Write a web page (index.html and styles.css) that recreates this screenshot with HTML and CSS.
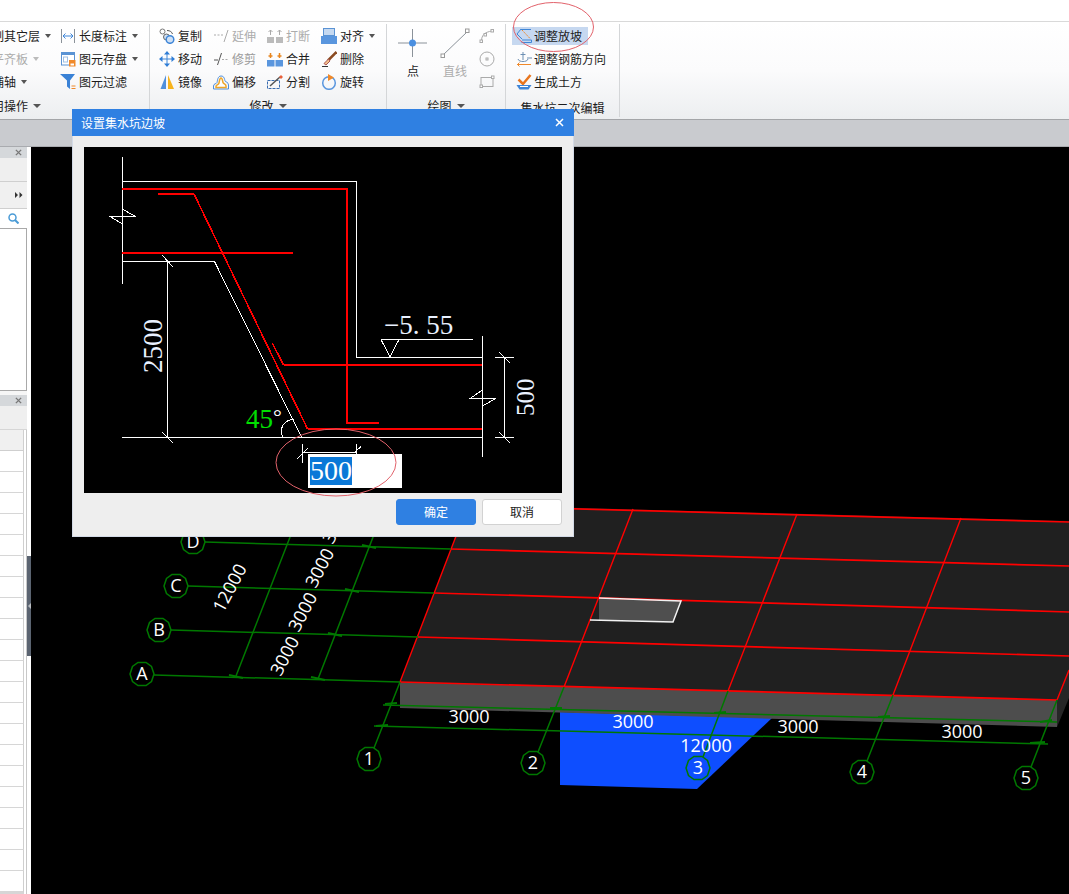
FILE: index.html
```html
<!DOCTYPE html>
<html lang="zh">
<head>
<meta charset="utf-8">
<title>设置集水坑边坡</title>
<link rel="stylesheet" href="styles.css">
</head>
<body>
<div class="app">
  <div class="topbar"></div>

  <div class="ribbon">
    <section class="group g1">
      <div class="g1-body">
        <div class="col c-first">
          <div class="tool"><span>制其它层</span><i class="arrow"></i></div>
          <div class="tool off"><span>平齐板</span><i class="arrow"></i></div>
          <div class="tool"><span>捕轴</span><i class="arrow"></i></div>
        </div>
        <div class="col">
          <div class="tool"><svg class="ico" viewBox="0 0 16 16"><path d="M1.5 1v14M14.5 1v14" stroke="#8b9299" fill="none"/><path d="M3 8h10M5.5 5.5 3 8l2.5 2.5M10.5 5.5 13 8l-2.5 2.5" stroke="#3f86d8" fill="none"/></svg><span>长度标注</span><i class="arrow"></i></div>
          <div class="tool"><svg class="ico" viewBox="0 0 16 16"><rect x="1.5" y="1.5" width="13" height="12.5" fill="#fff" stroke="#5a93d4"/><rect x="1" y="1" width="14" height="3" fill="#5a93d4"/><rect x="3.5" y="6" width="4" height="5" fill="none" stroke="#9fbfe4"/><rect x="9" y="9" width="6.5" height="6.5" fill="#f0892a"/><rect x="10.5" y="12.5" width="3.5" height="2" fill="#fff"/></svg><span>图元存盘</span><i class="arrow"></i></div>
          <div class="tool"><svg class="ico" viewBox="0 0 16 16"><path d="M0 0h15L10 6.500V15L7 12.500V6.500z" fill="#3a82d6"/><path d="M11.500 12h4M11.500 14.500h4" stroke="#f0892a"/></svg><span>图元过滤</span></div>
        </div>
      </div>
      <div class="label label-cut"><span>用操作</span><i class="arrow wide"></i></div>
    </section>

    <section class="group g2">
      <div class="grid4">
        <div class="tool"><svg class="ico" viewBox="0 0 16 16"><circle cx="3.500" cy="3.500" r="2.500" fill="none" stroke="#777"/><path d="M8 2.500c3 0 5 1.500 5.500 3.500" fill="none" stroke="#555"/><circle cx="7.500" cy="9" r="3" fill="#cfe0f4" stroke="#666"/><circle cx="11" cy="11.500" r="3.800" fill="#cfe0f4" stroke="#3f86d8" stroke-width="1.500"/></svg><span>复制</span></div>
        <div class="tool off"><svg class="ico" viewBox="0 0 16 16"><path d="M1 7h9" stroke="#aaa" stroke-dasharray="2 1.500"/><path d="M11 14l4-12" stroke="#aaa"/></svg><span>延伸</span></div>
        <div class="tool off"><svg class="ico" viewBox="0 0 16 16"><rect x="0" y="9" width="7" height="6" fill="#bbb"/><rect x="9" y="9" width="7" height="6" fill="#bbb"/><path d="M3.500 7V2M1.500 4l2-2 2 2M12.500 7V2M10.500 4l2-2 2 2" stroke="#aaa" fill="none"/></svg><span>打断</span></div>
        <div class="tool"><svg class="ico" viewBox="0 0 16 16"><rect x="2.500" y="0.500" width="11" height="7" fill="#c5d9f1" stroke="#5a93d4"/><rect x="0" y="8" width="16" height="8" fill="#5a96de"/></svg><span>对齐</span><i class="arrow"></i></div>

        <div class="tool"><svg class="ico" viewBox="0 0 16 16"><path d="M8 3v10M3 8h10" stroke="#3f86d8"/><path d="M8 0 5 3.500h6zM8 16l-3-3.500h6zM0 8l3.500-3v6zM16 8l-3.500-3v6z" fill="#2f7dd6"/></svg><span>移动</span></div>
        <div class="tool off2"><svg class="ico" viewBox="0 0 16 16"><path d="M1 9h4" stroke="#555"/><path d="M9 8.500h7" stroke="#aaa" stroke-dasharray="2 1.500"/><path d="M4.500 14l4-12" stroke="#555"/></svg><span>修剪</span></div>
        <div class="tool"><svg class="ico" viewBox="0 0 16 16"><rect x="0" y="9" width="7.500" height="6.500" fill="#5a96de"/><rect x="8.500" y="9" width="7.500" height="6.500" fill="#5a96de"/><path d="M3.500 7V2M1.500 5h4M12.500 7V2M10.500 5h4" stroke="#e8851e" stroke-width="1.500"/></svg><span>合并</span></div>
        <div class="tool"><svg class="ico" viewBox="0 0 16 16"><path d="M15.500 1 7 9.500" stroke="#8a4a20" stroke-width="2.500"/><path d="M7.500 8 3 12.500l2 1.500 4-4z" fill="#f3c08a" stroke="#a55"/><path d="M1 15.500h6" stroke="#333"/></svg><span>删除</span></div>

        <div class="tool"><svg class="ico" viewBox="0 0 16 16"><path d="M7 1v14H1.500z" fill="#4f8fdc"/><path d="M9 1l6 14H9z" fill="#f7b31c"/></svg><span>镜像</span></div>
        <div class="tool"><svg class="ico" viewBox="0 0 16 16"><path d="M.5 15v-3c0-2.500 3-2 3.500-3.500S4.500 2 8 2s3.500 3.500 4 5c.5 1 3.500 1 3.500 4v4z" fill="none" stroke="#4f8fdc"/><path d="M3 13.500v-1c0-1.500 2.500-1.500 3-3.500S6.500 4 8 4s1.500 3 2 4.500c.5 1.500 3 1.500 3 3.500v1.500z" fill="#fff" stroke="#eea62a" stroke-width="1.500"/></svg><span>偏移</span></div>
        <div class="tool"><svg class="ico" viewBox="0 0 16 16"><path d="M.5 6.500h12v8H.5z" fill="none" stroke="#3a6db0" stroke-dasharray="3 1"/><path d="M3 12 13 3" stroke="#555" stroke-width="1.500"/><path d="M12 3l2-2 2 2-2 2z" fill="#e8603a"/></svg><span>分割</span></div>
        <div class="tool"><svg class="ico" viewBox="0 0 16 16"><circle cx="8" cy="9" r="6.300" fill="none" stroke="#5a96de" stroke-width="1.500"/><path d="M7 0l6 3.500-6 3.500z" fill="#f0892a"/></svg><span>旋转</span></div>
      </div>
      <div class="label"><span>修改</span><i class="arrow wide"></i></div>
    </section>

    <section class="group g3">
      <div class="g3-body">
        <div class="big">
          <svg class="ico-big" viewBox="0 0 30 38"><path d="M14.500 4v28M0 18h29" stroke="#8b9299" fill="none"/><circle cx="14.500" cy="18" r="3.500" fill="#4a8fe0"/></svg>
          <span>点</span>
        </div>
        <div class="big off">
          <svg class="ico-big" viewBox="0 0 30 38"><path d="M3 30 27 7" stroke="#8b9299" fill="none"/><rect x="1" y="29" width="3.500" height="3.500" fill="#fff" stroke="#999"/><rect x="25.500" y="4" width="3.500" height="3.500" fill="#fff" stroke="#999"/></svg>
          <span>直线</span>
        </div>
        <div class="col small">
          <div class="tool"><svg class="ico" viewBox="0 0 16 16"><path d="M2.500 13C2.500 7 6 4 13 3" fill="none" stroke="#aaa"/><rect x="1" y="12" width="2.500" height="2.500" fill="#fff" stroke="#aaa"/><rect x="5" y="5.500" width="2.500" height="2.500" fill="#fff" stroke="#aaa"/><rect x="12" y="1.500" width="2.500" height="2.500" fill="#fff" stroke="#aaa"/></svg></div>
          <div class="tool"><svg class="ico" viewBox="0 0 16 16"><circle cx="8" cy="8" r="7" fill="none" stroke="#aaa"/><rect x="7" y="7" width="2" height="2" fill="none" stroke="#aaa"/></svg></div>
          <div class="tool"><svg class="ico" viewBox="0 0 16 16"><rect x="2" y="3.500" width="12" height="9" fill="none" stroke="#aaa"/><rect x="1" y="11" width="2.500" height="2.500" fill="#fff" stroke="#aaa"/><rect x="12.500" y="2" width="2.500" height="2.500" fill="#fff" stroke="#aaa"/></svg></div>
        </div>
      </div>
      <div class="label"><span>绘图</span><i class="arrow wide"></i></div>
    </section>

    <section class="group g4">
      <div class="col g4-body">
        <div class="tool sel"><svg class="ico" viewBox="0 0 16 16"><path d="M5 1 1 6l5 5" fill="none" stroke="#3f86d8"/><path d="M5 1.500h10M6 12h9.500v2.500H5.500" fill="none" stroke="#3f86d8"/><path d="M6 2l8.500 9" stroke="#f0892a" stroke-dasharray="2 1"/></svg><span>调整放坡</span></div>
        <div class="tool"><svg class="ico" viewBox="0 0 16 16"><path d="M7 1v8M4.500 3.500h5M2 8c.5 2 3 2.500 5 2.500S11.500 10 12 8" fill="none" stroke="#6d8fb3"/><path d="M11 7h5" stroke="#6d8fb3"/><path d="M1 13.500h14M3.500 11.500l-2 2 2 2" fill="none" stroke="#f0892a"/></svg><span>调整钢筋方向</span></div>
        <div class="tool"><svg class="ico" viewBox="0 0 16 16"><path d="M2.500 5.500 7 10l7.500-9" fill="none" stroke="#e8751e" stroke-width="2.500"/><path d="M.5 11h15l-3 4.500h-9z" fill="#3f86d8"/><path d="M4 12.500h8" stroke="#fff"/></svg><span>生成土方</span></div>
      </div>
      <div class="label label-low"><span>集水坑二次编辑</span></div>
    </section>
  </div>

  <div class="strip"></div>

  <div class="main">
    <aside class="panel">
      <div class="p-title"><svg class="p-x" viewBox="0 0 8 8"><path d="M1 1l6 6M7 1 1 7" stroke="#777" stroke-width="1.600"/></svg></div>
      <div class="p-sec"></div>
      <div class="p-sec2"><svg class="p-more" viewBox="0 0 8 6"><path d="M0 0l3 3-3 3zM4.500 0l3 3-3 3z" fill="#333"/></svg></div>
      <div class="p-search"><svg class="p-lens" viewBox="0 0 11 11"><circle cx="4.500" cy="4.500" r="3.500" fill="none" stroke="#4a9bd6" stroke-width="1.500"/><path d="M7 7l3.500 3.500" stroke="#4a9bd6" stroke-width="2"/></svg></div>
      <div class="p-list"></div>
      <div class="p-gap"></div>
      <div class="p-title"><svg class="p-x" viewBox="0 0 8 8"><path d="M1 1l6 6M7 1 1 7" stroke="#777" stroke-width="1.600"/></svg></div>
      <div class="p-sec p-sec-b"></div>
      <div class="p-table">
        <div class="p-head"></div>
        <div class="p-row"></div><div class="p-row"></div><div class="p-row"></div><div class="p-row"></div>
        <div class="p-row"></div><div class="p-row"></div><div class="p-row"></div><div class="p-row"></div>
        <div class="p-row"></div><div class="p-row"></div><div class="p-row"></div><div class="p-row"></div>
        <div class="p-row"></div><div class="p-row"></div><div class="p-row"></div><div class="p-row"></div>
        <div class="p-row"></div><div class="p-row"></div><div class="p-row"></div><div class="p-row"></div>
        <div class="p-foot"></div>
      </div>
    </aside>
    <div class="splitter"><div class="grip"><i class="grip-arrow"></i></div></div>
    <div class="canvas">
      <svg class="scene" viewBox="31 147 1038 747">
        <defs>
          <polygon id="oct" points="12,0 9.500,7.500 4,11.500 -4,11.500 -9.500,7.500 -12,0 -9.500,-7.500 -4,-11.500 4,-11.500 9.500,-7.500"/>
        </defs>
        <polygon points="560,712 772,718 697,789 560,785" fill="#0e4eff"/>
        <polygon points="400,682 1057,700 1057,727 400,708" fill="#4d4d4d"/>
        <polygon points="1057,700 1069,670 1069,698 1057,727" fill="#262626"/>
        <polygon points="400,682 468,505 1069,521 1069,670 1057,700" fill="#202020"/>
        <polygon points="599,598 681,601 673,622 599,620" fill="#4f4f4f"/>

        <g class="red-h">
          <path d="M468 506 1069 522M451 549 1069 566M434 593 1069 612M418 637 1069 656M400 682 1057 700"/>
        </g>
        <g class="red-v">
          <path d="M400 682 468 505M564 687 633 509M728 691 797 514M893 695 961 518M1057 700 1069 670"/>
        </g>
        <g class="white-l">
          <path d="M599 598 681 601 673 622 590 620"/>
        </g>

        <g class="green">
          <path d="M154 675 400 682M171 630 418 637M188 586 434 593M205 542 451 549"/>
          <path d="M236 676 292 532M318 679 375 532"/>
          <path d="M374 748 400 682M538 752 564 687M703 757 728 691M867 761 893 695M1031 767 1057 700"/>
          <path d="M383 705 1057 722M374 726 1048 744"/>
        </g>
        <g class="green-t">
          <path d="M229 675 243 678M311 677 325 680M328 633 342 636M345 589 359 592M362 545 376 548"/>
          <path d="M385 704 397 703M376 726 388 725M550 708 562 708M714 713 726 712M878 717 890 716M1040 722 1052 720M1030 743 1045 742"/>
        </g>

        <g class="octs">
          <use href="#oct" x="142" y="674"/><use href="#oct" x="159" y="630"/><use href="#oct" x="176" y="586"/><use href="#oct" x="193" y="542"/>
          <use href="#oct" x="369" y="759"/><use href="#oct" x="533" y="763"/><use href="#oct" x="698" y="768"/><use href="#oct" x="862" y="772"/><use href="#oct" x="1026" y="778"/>
        </g>

        <g class="lbl">
          <text x="142" y="680">A</text><text x="159" y="636">B</text><text x="176" y="592">C</text><text x="193" y="548">D</text>
          <text x="369" y="765">1</text><text x="533" y="769">2</text><text x="698" y="774">3</text><text x="862" y="778">4</text><text x="1026" y="784">5</text>
        </g>
        <g class="dim">
          <text x="469" y="723">3000</text><text x="633" y="728">3000</text><text x="798" y="733">3000</text><text x="962" y="738">3000</text>
          <text x="706" y="752">12000</text>
          <text x="230" y="594" transform="rotate(-62 230 588)">12000</text>
          <text x="285" y="662" transform="rotate(-62 285 656)">3000</text>
          <text x="303" y="618" transform="rotate(-62 303 612)">3000</text>
          <text x="320" y="574" transform="rotate(-62 320 568)">3000</text>
          <text x="337" y="530" transform="rotate(-62 337 524)">3000</text>
        </g>
      </svg>
    </div>
  </div>

  <div class="dialog">
    <div class="d-title"><span>设置集水坑边坡</span><svg class="d-x" viewBox="0 0 9 9"><path d="M1 1l7 7M8 1 1 8" stroke="#fff" stroke-width="1.500"/></svg></div>
    <div class="d-view">
      <svg class="d-draw" viewBox="84 147 478 346">
        <g class="w">
          <path d="M122.500 157V284M122 181.500H356.500V357.500H482.500M122 261.500H214.500L301.500 437M167.500 261.500V437.500M122 437.500H482.500M482.500 336V457"/>
          <path d="M162 255 173 267M162 432 173 443"/>
          <path d="M123 209.500 135.500 216.500H110L122.500 224"/>
          <path d="M482.500 390 470 398.500H495.500L482.500 406"/>
          <path d="M381 339.500H472.500M381 339.500 390 357 399 339.500"/>
          <path d="M504.500 357.500V437.500M495 357.500H514M495 437.500H514M499 352 510 363M499 432 510 443"/>
          <path d="M282.500 437C279 428 284 420 294 419"/>
          <path d="M302.500 452.500H356.500M302.500 444V463M356.500 444V463M297 459 307.500 448.500M354 453 361 446.500"/>
        </g>
        <g class="r">
          <path d="M122 189H346.800V423H379"/>
          <path d="M158 194H194M307.500 428.800H482"/>
          <path d="M122 252.800H292.500"/>
          <path d="M283.500 365H482"/>
        </g>
        <g class="r-thin">
          <path d="M194 194 307.500 428.800"/>
          <path d="M272.500 343.500 283.500 365"/>
        </g>
        <text class="cad" x="384" y="334">−5. 55</text>
        <text class="cad" transform="translate(162 373) rotate(-90)">2500</text>
        <text class="cad cad-s" transform="translate(534 416) rotate(-90)">500</text>
        <text class="cad cad-g" x="246" y="428">45<tspan class="cad-d" dy="-4">°</tspan></text>
      </svg>
      <div class="d-input"><span class="d-sel">500</span></div>
    </div>
    <div class="d-foot">
      <button class="btn btn-ok" type="button">确定</button>
      <button class="btn" type="button">取消</button>
    </div>
  </div>

  <svg class="marks" viewBox="0 0 1069 894">
    <ellipse cx="553.500" cy="27" rx="40" ry="24.500"/>
    <ellipse cx="336" cy="462.500" rx="60" ry="33.500"/>
  </svg>
</div>
</body>
</html>
```

FILE: styles.css
```css
* { box-sizing: border-box; }
html, body { margin: 0; padding: 0; }
body { background: #fff; }

.app {
  position: relative;
  width: 1069px;
  height: 894px;
  overflow: hidden;
  display: flex;
  flex-direction: column;
  font: 12px/16px "Noto Sans CJK SC", "Liberation Sans", sans-serif;
  color: #1c1c1c;
}

.topbar { height: 22px; flex: none; background: #fff; border-bottom: 1px solid #d9d9d9; }

.ribbon {
  height: 98px;
  flex: none;
  display: flex;
  overflow: hidden;
  background: linear-gradient(#fff 0%, #fbfbfc 50%, #eceef0 100%);
  border-bottom: 1px solid #a3a5a8;
}
.group {
  height: 93px;
  margin-top: 2px;
  flex: none;
  display: flex;
  flex-direction: column;
  border-right: 1px solid #d4d6d8;
}
.g1 { width: 150px; overflow: hidden; }
.g2 { width: 237px; }
.g3 { width: 119px; }
.g4 { width: 114px; }

.col { display: flex; flex-direction: column; }
.tool { height: 23px; display: flex; align-items: center; gap: 3px; white-space: nowrap; }
.ico { width: 16px; height: 16px; flex: none; display: block; }
.off { color: #acacac; }
.off2 span { color: #9a9a9a; }
.arrow {
  width: 0; height: 0; margin-left: 2px; flex: none;
  border-left: 3.5px solid transparent;
  border-right: 3.5px solid transparent;
  border-top: 4px solid #555;
}
.off .arrow { border-top-color: #bbb; }
.arrow.wide { margin-left: 3px; border-left-width: 4px; border-right-width: 4px; }

.g1-body { display: flex; margin-left: -8px; height: 70px; }
.c-first { width: 68px; flex: none; }
.label {
  height: 23px;
  display: flex;
  align-items: center;
  justify-content: center;
  gap: 2px;
}
.label-cut { justify-content: flex-start; margin-left: -8px; }
.label-low { padding-top: 4px; }

.grid4 {
  height: 70px;
  padding-left: 9px;
  display: grid;
  grid-template-columns: repeat(4, 54px);
  grid-auto-rows: 23px;
}

.g3-body { display: flex; height: 70px; padding: 1px 0 0 11px; }
.big { display: flex; flex-direction: column; align-items: center; width: 30px; margin-right: 12px; }
.ico-big { width: 30px; height: 38px; display: block; flex: none; }
.small { margin-left: -3px; margin-top: -1px; }

.g4-body { height: 70px; padding: 3px 0 0 6px; gap: 5px; }
.g4-body .tool { height: 18px; width: 100px; gap: 2px; padding-left: 4px; }
.g4-body .tool.sel { width: 76px; background: #c6d8f0; }

.strip { height: 27px; flex: none; background: #c9cbcf; border-bottom: 1px solid #a9abaf; }

.main { flex: 1; min-height: 0; display: flex; }

.panel { width: 27px; flex: none; display: flex; flex-direction: column; background: #fff; }
.p-title { height: 11px; flex: none; background: #d5d8db; display: flex; align-items: center; justify-content: flex-end; padding-right: 5px; }
.p-x { width: 7px; height: 7px; display: block; }
.p-sec { height: 24px; flex: none; background: #efefef; border-bottom: 1px solid #cfcfcf; }
.p-sec2 { height: 27px; flex: none; background: #f0f0f0; border-bottom: 1px solid #cfcfcf; display: flex; align-items: center; justify-content: flex-end; padding-right: 4px; }
.p-more { width: 8px; height: 6px; display: block; }
.p-search { height: 20px; flex: none; background: #fff; border-bottom: 1px solid #a9a9a9; display: flex; align-items: center; justify-content: flex-end; padding-right: 8px; }
.p-lens { width: 11px; height: 11px; display: block; }
.p-list { height: 162px; flex: none; background: #fff; border-right: 1px solid #a9a9a9; border-bottom: 1px solid #a9a9a9; }
.p-gap { height: 4px; flex: none; background: #f6f6f6; }
.p-sec-b { border-bottom-color: #d6d6d6; }
.p-table { flex: 1; min-height: 0; display: flex; flex-direction: column; border-right: 1px solid #c8c8c8; padding-right: 2px; }
.p-head { height: 21px; flex: none; background: #f0f0f0; border-right: 1px solid #cfcfcf; border-bottom: 1px solid #cfcfcf; }
.p-row { height: 21px; flex: none; background: #fff; border-right: 1px solid #cfcfcf; border-bottom: 1px solid #d6d6d6; }
.p-foot { flex: 1; background: #fff; border-right: 1px solid #cfcfcf; border-bottom: 3px solid #d6d6d6; }

.splitter { width: 4px; flex: none; background: #fff; padding-top: 409px; }
.grip { width: 4px; height: 100px; background: #5b6471; display: flex; align-items: center; }
.grip-arrow {
  width: 0; height: 0;
  margin-left: 1px;
  border-top: 3.5px solid transparent;
  border-bottom: 3.5px solid transparent;
  border-right: 3px solid #b9bdc2;
}

.canvas { flex: 1; min-width: 0; background: #000; }
.scene { display: block; width: 1038px; height: 747px; }

.red-h path { fill: none; stroke: #f00; stroke-width: 1.700; }
.red-v path { fill: none; stroke: #f00; stroke-width: 1.400; }
.white-l path { fill: none; stroke: #f2f2f2; stroke-width: 1.500; }
.green path { fill: none; stroke: #007800; stroke-width: 1.500; }
.green-t path { fill: none; stroke: #007800; stroke-width: 2; }
.octs use { fill: none; stroke: #007800; stroke-width: 1.500; }
.lbl text { font: 18px "Open Sans", sans-serif; fill: #fff; text-anchor: middle; }
.dim text { font: 18px "Open Sans", sans-serif; fill: #fff; text-anchor: middle; }

.dialog {
  position: absolute;
  left: 72px;
  top: 109px;
  width: 502px;
  height: 428px;
  background: #eee;
  border: 1px solid #d3dae6;
  border-top: none;
}
.d-title {
  height: 27px;
  margin: 0 -1px;
  padding: 0 9px;
  display: flex;
  align-items: center;
  justify-content: space-between;
  background: #2f80e2;
  color: #fff;
}
.d-x { width: 9px; height: 9px; display: block; margin-right: 1px; }
.d-view {
  position: relative;
  width: 478px;
  height: 346px;
  margin: 11px 0 0 11px;
  background: #000;
}
.d-draw { display: block; width: 478px; height: 346px; }
.w path { fill: none; stroke: #fff; stroke-width: 1; shape-rendering: crispEdges; }
.r path { fill: none; stroke: #f00; stroke-width: 2; shape-rendering: crispEdges; }
.r-thin path { fill: none; stroke: #f00; stroke-width: 1.600; shape-rendering: crispEdges; }
.cad { font: 27px "Liberation Serif", serif; fill: #e9f1ff; }
.cad-s { font-size: 25px; }
.cad-g { fill: #00e000; }
.cad-d { font-size: 22px; fill: #fff; }

.d-input {
  position: absolute;
  left: 224px;
  top: 307px;
  width: 94px;
  height: 34px;
  padding: 3px 0 0 2px;
  background: #fff;
}
.d-sel {
  display: block;
  width: 42px;
  height: 28px;
  background: #0a78d7;
  color: #fff;
  font: 28px/28px "Liberation Serif", serif;
}

.d-foot { display: flex; justify-content: flex-end; gap: 6px; padding: 6px 11px 0 0; }
.btn {
  width: 80px;
  height: 26px;
  padding: 0;
  font: inherit;
  color: #222;
  background: #fff;
  border: 1px solid #d2d2d2;
  border-radius: 3px;
}
.btn-ok { background: #2f80e2; border-color: #2f80e2; color: #fff; }

.marks { position: absolute; left: 0; top: 0; width: 1069px; height: 894px; pointer-events: none; }
.marks ellipse { fill: none; stroke: #e2626b; stroke-width: 1; }
```
